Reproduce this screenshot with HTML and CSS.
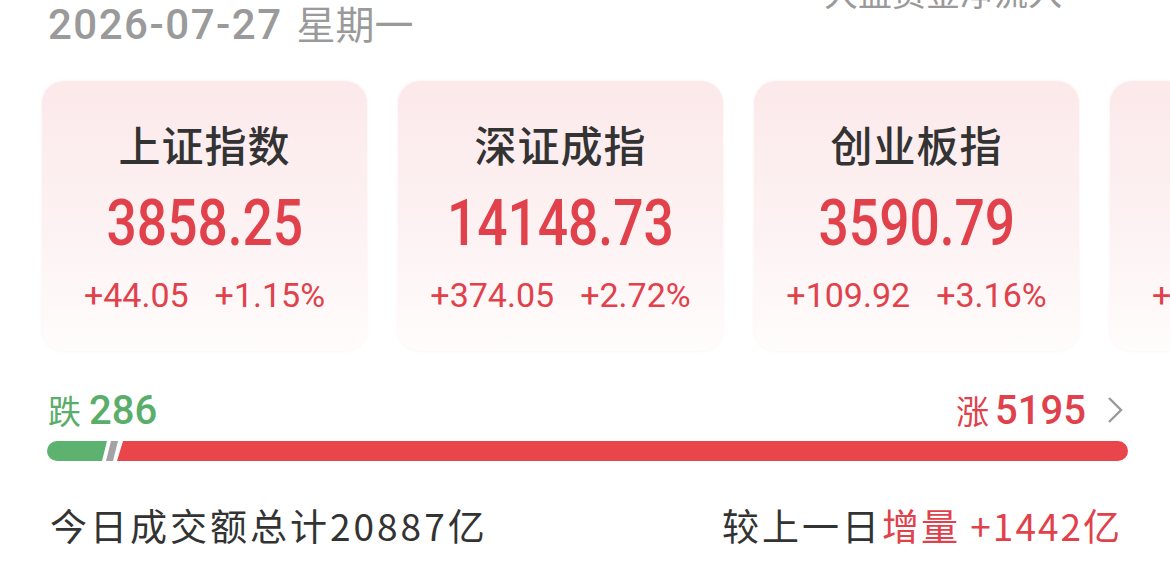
FILE: index.html
```html
<!DOCTYPE html>
<html lang="zh-CN">

<head>
    <meta charset="UTF-8">
    <meta name="viewport" content="width=device-width, initial-scale=1.0">
    <title>行情</title>
    <link rel="stylesheet" href="styles.css">
</head>

<body>
    <div class="page">
        <!-- 日期 + 资金流入标题 -->
        <div class="top-row">
            <div class="date">2026-07-27<span class="week">星期一</span></div>
            <div class="flow-title">大盘资金净流入</div>
        </div>

        <!-- 指数卡片 -->
        <div class="cards">
            <div class="card">
                <div class="card-name">上证指数</div>
                <div class="card-price">3858.25</div>
                <div class="card-change"><span>+44.05</span><span>+1.15%</span></div>
            </div>
            <div class="card">
                <div class="card-name">深证成指</div>
                <div class="card-price">14148.73</div>
                <div class="card-change"><span>+374.05</span><span>+2.72%</span></div>
            </div>
            <div class="card">
                <div class="card-name">创业板指</div>
                <div class="card-price">3590.79</div>
                <div class="card-change"><span>+109.92</span><span>+3.16%</span></div>
            </div>
            <div class="card">
                <div class="card-name">科创50</div>
                <div class="card-price">1128.64</div>
                <div class="card-change"><span>+38.41</span><span>+3.52%</span></div>
            </div>
        </div>

        <!-- 涨跌分布 -->
        <div class="updown">
            <div class="down"><span class="ud-label">跌</span><span class="ud-num">286</span></div>
            <div class="up">
                <span class="ud-label">涨</span><span class="ud-num">5195</span>
                <svg class="arrow" width="18" height="30" viewBox="0 0 18 30">
                    <polyline points="3,3 15,15 3,27" fill="none" stroke="#999" stroke-width="2.4" />
                </svg>
            </div>
        </div>
        <div class="bar">
            <div class="bar-down"></div>
            <div class="bar-flat"></div>
            <div class="bar-up"></div>
        </div>

        <!-- 成交额 -->
        <div class="volume">
            <div>今日成交额总计20887亿</div>
            <div>较上一日<span class="red">增量 +1442亿</span></div>
        </div>
    </div>
</body>

</html>
```

FILE: styles.css
```css
body {
    margin: 0;
    background: #fff;
    font-family: Roboto, "Noto Sans CJK SC", sans-serif;
    overflow: hidden;
}

.page {
    width: 1170px;
    height: 564px;
    overflow: hidden;
}

.top-row {
    display: flex;
    justify-content: space-between;
    align-items: flex-start;
    padding: 0 108px 0 48px;
    height: 81px;
}

.date {
    font-size: 42px;
    line-height: 48px;
    font-weight: 500;
    color: #9a9a9a;
    letter-spacing: 1.5px;
    margin-top: 1px;
}

.week {
    font-size: 39px;
    font-weight: 400;
    letter-spacing: 0;
    margin-left: 14px;
}

.flow-title {
    font-size: 34px;
    line-height: 40px;
    color: #999;
    margin-top: -26px;
}

.cards {
    display: flex;
    gap: 31px;
    padding-left: 42px;
    height: 270px;
}

.card {
    flex: 0 0 325px;
    height: 270px;
    border-radius: 22px;
    background: linear-gradient(180deg, #fce9ea 0%, #fdf3f4 60%, #fffcfc 100%);
    box-shadow: 0 0 3px rgba(240, 200, 205, 0.35);
    display: flex;
    flex-direction: column;
    align-items: center;
}

.card-name {
    margin-top: 41px;
    font-size: 42px;
    line-height: 52px;
    font-weight: 500;
    color: #333;
    letter-spacing: 1px;
}

/* 数字偏窄，横向压一点 */
.card-price {
    margin-top: 14px;
    font-size: 65px;
    line-height: 70px;
    font-weight: 500;
    color: #e0414b;
    transform: scaleX(0.82);
}

.card-change {
    margin-top: 17px;
    display: flex;
    gap: 26px;
    font-size: 34px;
    line-height: 40px;
    color: #e0414b;
}

.updown {
    display: flex;
    justify-content: space-between;
    align-items: center;
    padding: 0 46px 0 48px;
    margin-top: 36px;
    height: 46px;
}

.down,
.up {
    display: flex;
    align-items: center;
}

.down {
    color: #5aae6a;
}

.up {
    color: #e0414b;
}

.ud-label {
    font-size: 33px;
}

.ud-num {
    font-size: 40px;
    font-weight: 500;
    margin-left: 6px;
}

.down .ud-num {
    margin-left: 8px;
}

.arrow {
    margin-left: 20px;
}

.bar {
    display: flex;
    margin: 8px 42px 0 47px;
    height: 20px;
}

.bar-down {
    width: 60px;
    background: #5cb26e;
    border-radius: 10px 0 0 10px;
    clip-path: polygon(0 0, 100% 0, calc(100% - 5px) 100%, 0 100%);
}

.bar-flat {
    width: 12px;
    margin-left: -1px;
    background: #a3a3a6;
    clip-path: polygon(5px 0, 100% 0, calc(100% - 5px) 100%, 0 100%);
}

.bar-up {
    flex: 1;
    margin-left: -1px;
    background: #e8464b;
    border-radius: 0 10px 10px 0;
    clip-path: polygon(6px 0, 100% 0, 100% 100%, 0 100%);
}

.volume {
    display: flex;
    justify-content: space-between;
    padding: 0 48px 0 50px;
    margin-top: 42px;
    font-family: "Noto Sans CJK SC", sans-serif;
    font-size: 37px;
    line-height: 44px;
    letter-spacing: 3px;
    color: #333;
}

.volume .red {
    letter-spacing: 2px;
}

.red {
    color: #e0414b;
}
```
